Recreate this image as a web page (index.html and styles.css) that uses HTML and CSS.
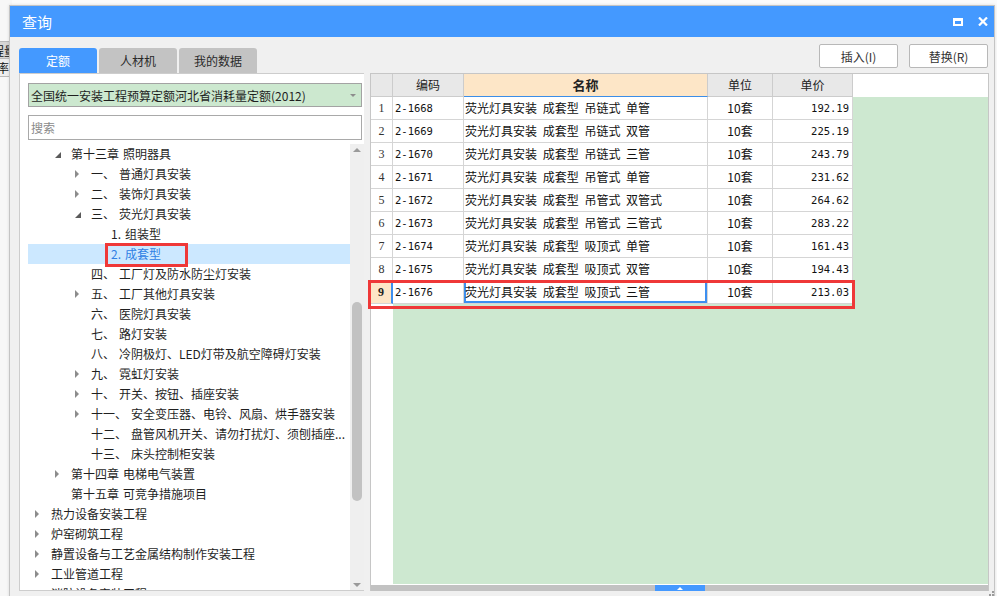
FILE: index.html
```html
<!DOCTYPE html>
<html lang="zh-CN">
<head>
<meta charset="utf-8">
<title>查询</title>
<link rel="stylesheet" href="styles.css">
</head>
<body>
<div class="app-bg">
  <div class="bg-row bg-row1"><span class="bg-t1">程量</span></div>
  <div class="bg-row bg-row2"><span class="bg-t2">率</span></div>
</div>

<div class="dialog">
  <div class="titlebar">
    <span class="title">查询</span>
    <div class="title-btns">
      <span class="btn-max"></span>
      <svg class="btn-close" width="10" height="9" viewBox="0 0 10 9"><path d="M1 0.5 L9 8.5 M9 0.5 L1 8.5" stroke="#fff" stroke-width="2.2" fill="none"/></svg>
    </div>
  </div>

  <div class="dlg-body">
    <div class="left-col">
      <div class="tabs">
        <div class="tab active">定额</div>
        <div class="tab">人材机</div>
        <div class="tab">我的数据</div>
      </div>
      <div class="panel">
        <div class="combo"><span>全国统一安装工程预算定额河北省消耗量定额(2012)</span><span class="combo-arrow"></span></div>
        <div class="search">搜索</div>
        <div class="tree-wrap">
          <div class="tree">
            <div class="row l1"><span class="tg open"></span><span class="lb"><span class="no">第十三章</span>照明器具</span></div>
            <div class="row l2"><span class="tg closed"></span><span class="lb"><span class="no">一、</span>普通灯具安装</span></div>
            <div class="row l2"><span class="tg closed"></span><span class="lb"><span class="no">二、</span>装饰灯具安装</span></div>
            <div class="row l2"><span class="tg open"></span><span class="lb"><span class="no">三、</span>荧光灯具安装</span></div>
            <div class="row l3"><span class="tg"></span><span class="lb"><span class="no">1.</span>组装型</span></div>
            <div class="row l3 sel"><span class="tg"></span><span class="lb"><span class="no">2.</span>成套型</span></div>
            <div class="row l2"><span class="tg"></span><span class="lb"><span class="no">四、</span>工厂灯及防水防尘灯安装</span></div>
            <div class="row l2"><span class="tg closed"></span><span class="lb"><span class="no">五、</span>工厂其他灯具安装</span></div>
            <div class="row l2"><span class="tg"></span><span class="lb"><span class="no">六、</span>医院灯具安装</span></div>
            <div class="row l2"><span class="tg"></span><span class="lb"><span class="no">七、</span>路灯安装</span></div>
            <div class="row l2"><span class="tg"></span><span class="lb"><span class="no">八、</span>冷阴极灯、LED灯带及航空障碍灯安装</span></div>
            <div class="row l2"><span class="tg closed"></span><span class="lb"><span class="no">九、</span>霓虹灯安装</span></div>
            <div class="row l2"><span class="tg closed"></span><span class="lb"><span class="no">十、</span>开关、按钮、插座安装</span></div>
            <div class="row l2"><span class="tg closed"></span><span class="lb"><span class="no">十一、</span>安全变压器、电铃、风扇、烘手器安装</span></div>
            <div class="row l2"><span class="tg"></span><span class="lb"><span class="no">十二、</span>盘管风机开关、请勿打扰灯、须刨插座...</span></div>
            <div class="row l2"><span class="tg"></span><span class="lb"><span class="no">十三、</span>床头控制柜安装</span></div>
            <div class="row l1"><span class="tg closed"></span><span class="lb"><span class="no">第十四章</span>电梯电气装置</span></div>
            <div class="row l1"><span class="tg"></span><span class="lb"><span class="no">第十五章</span>可竞争措施项目</span></div>
            <div class="row l0"><span class="tg closed"></span><span class="lb">热力设备安装工程</span></div>
            <div class="row l0"><span class="tg closed"></span><span class="lb">炉窑砌筑工程</span></div>
            <div class="row l0"><span class="tg closed"></span><span class="lb">静置设备与工艺金属结构制作安装工程</span></div>
            <div class="row l0"><span class="tg closed"></span><span class="lb">工业管道工程</span></div>
            <div class="row l0"><span class="tg closed"></span><span class="lb">消防设备安装工程</span></div>
          </div>
          <div class="vscroll">
            <span class="v-up"></span>
            <span class="v-thumb"></span>
            <span class="v-down"></span>
          </div>
        </div>
      </div>
    </div>

    <div class="right-col">
      <div class="actions">
        <button class="btn">插入(I)</button>
        <button class="btn">替换(R)</button>
      </div>
      <div class="grid">
        <div class="g-head">
          <div class="h"></div>
          <div class="h">编码</div>
          <div class="h h-name">名称</div>
          <div class="h">单位</div>
          <div class="h">单价</div>
          <div class="h h-fill"></div>
        </div>
        <div class="g-body">
          <div class="g-row"><div class="c c-no">1</div><div class="c c-code">2-1668</div><div class="c c-name">荧光灯具安装 成套型 吊链式 单管</div><div class="c c-unit">10套</div><div class="c c-price">192.19</div></div>
          <div class="g-row"><div class="c c-no">2</div><div class="c c-code">2-1669</div><div class="c c-name">荧光灯具安装 成套型 吊链式 双管</div><div class="c c-unit">10套</div><div class="c c-price">225.19</div></div>
          <div class="g-row"><div class="c c-no">3</div><div class="c c-code">2-1670</div><div class="c c-name">荧光灯具安装 成套型 吊链式 三管</div><div class="c c-unit">10套</div><div class="c c-price">243.79</div></div>
          <div class="g-row"><div class="c c-no">4</div><div class="c c-code">2-1671</div><div class="c c-name">荧光灯具安装 成套型 吊管式 单管</div><div class="c c-unit">10套</div><div class="c c-price">231.62</div></div>
          <div class="g-row"><div class="c c-no">5</div><div class="c c-code">2-1672</div><div class="c c-name">荧光灯具安装 成套型 吊管式 双管式</div><div class="c c-unit">10套</div><div class="c c-price">264.62</div></div>
          <div class="g-row"><div class="c c-no">6</div><div class="c c-code">2-1673</div><div class="c c-name">荧光灯具安装 成套型 吊管式 三管式</div><div class="c c-unit">10套</div><div class="c c-price">283.22</div></div>
          <div class="g-row"><div class="c c-no">7</div><div class="c c-code">2-1674</div><div class="c c-name">荧光灯具安装 成套型 吸顶式 单管</div><div class="c c-unit">10套</div><div class="c c-price">161.43</div></div>
          <div class="g-row"><div class="c c-no">8</div><div class="c c-code">2-1675</div><div class="c c-name">荧光灯具安装 成套型 吸顶式 双管</div><div class="c c-unit">10套</div><div class="c c-price">194.43</div></div>
          <div class="g-row cur"><div class="c c-no">9</div><div class="c c-code">2-1676</div><div class="c c-name">荧光灯具安装 成套型 吸顶式 三管</div><div class="c c-unit">10套</div><div class="c c-price">213.03</div></div>
        </div>
        <div class="hscroll"><span class="h-thumb"><span class="h-arrow"></span></span></div>
      </div>
    </div>
  </div>
  <span class="grip"></span>
</div>

<div class="mark mark-tree"></div>
<div class="mark mark-row"></div>
</body>
</html>
```

FILE: styles.css
```css
* { box-sizing: border-box; }
html, body { margin: 0; padding: 0; }
body {
  width: 997px;
  height: 596px;
  overflow: hidden;
  position: relative;
  background: #fbfbfb;
  font-family: "Noto Sans CJK SC", "Microsoft YaHei", sans-serif;
  font-size: 12px;
  color: #1f1f1f;
}

/* application behind the dialog */
.app-bg {
  position: absolute;
  left: 0;
  top: 0;
  width: 12px;
  height: 596px;
  background: #f7f7f7;
}
.bg-row {
  height: 18px;
  line-height: 17px;
  white-space: nowrap;
  overflow: hidden;
  border-bottom: 1px solid #b9b9b9;
  color: #111;
}
.bg-row1 { margin-top: 41px; background: #d6d6d6; border-top: 1px solid #b9b9b9; }
.bg-row2 { background: #eeeeee; }
.bg-t1 { display: inline-block; margin-left: -8px; }
.bg-t2 { display: inline-block; margin-left: -3px; }

/* dialog window */
.dialog {
  position: absolute;
  left: 9px;
  top: 5px;
  width: 986px;
  height: 600px;
  border: 1px solid #c4c4c4;
  background: #f0f0f0;
  display: flex;
  flex-direction: column;
  box-shadow: 0 0 3px rgba(0, 0, 0, 0.12);
}
.titlebar {
  flex: none;
  height: 31px;
  background: #4499ff;
  color: #fff;
  display: flex;
  align-items: center;
  justify-content: space-between;
  padding: 0 6px 0 12px;
}
.title { font-size: 15px; }
.title-btns { display: flex; align-items: center; gap: 15px; }
.btn-max {
  display: block;
  width: 10px;
  height: 8px;
  border: 2px solid #fff;
  border-top-width: 3px;
}
.btn-close { display: block; }

.dlg-body {
  flex: 1;
  display: flex;
  padding: 0 5px 0 9px;
  min-height: 0;
}

/* left column */
.left-col {
  width: 345px;
  flex: none;
  display: flex;
  flex-direction: column;
}
.tabs {
  margin-top: 11px;
  height: 25px;
  display: flex;
  gap: 2px;
}
.tab {
  width: 78px;
  height: 25px;
  line-height: 25px;
  text-align: center;
  background: #c3c3c3;
  color: #2a2a2a;
  border-radius: 3px 3px 0 0;
}
.tab.active { background: #4499ff; color: #fff; }

.panel {
  height: 518px;
  border: 1px solid #cdcdcd;
  border-right: none;
  background: #fff;
  padding: 9px 0 0 8px;
  display: flex;
  flex-direction: column;
}
.combo {
  width: 334px;
  height: 24px;
  flex: none;
  border: 1px solid #a3a3a3;
  background: #cce8cf;
  display: flex;
  align-items: center;
  justify-content: space-between;
  padding: 0 5px 0 2px;
  white-space: nowrap;
}
.combo-arrow {
  width: 0;
  height: 0;
  border-top: 3px solid #8d8d8d;
  border-left: 3px solid transparent;
  border-right: 3px solid transparent;
}
.search {
  width: 334px;
  height: 25px;
  flex: none;
  margin-top: 8px;
  border: 1px solid #a9a9a9;
  background: #fff;
  padding-left: 2px;
  line-height: 23px;
  color: #8a8a8a;
}
.tree-wrap {
  margin-top: 4px;
  flex: 1;
  min-height: 0;
  display: flex;
  overflow: hidden;
}
.tree {
  width: 322px;
  flex: none;
  overflow: hidden;
}
.row {
  height: 20px;
  display: flex;
  align-items: center;
  white-space: nowrap;
}
.row.l0 { padding-left: 8px; }
.row.l1 { padding-left: 28px; }
.row.l2 { padding-left: 48px; }
.row.l3 { padding-left: 68px; }
.row.sel { background: #cce8ff; color: #2f80e4; }
.tg {
  width: 15px;
  height: 20px;
  flex: none;
  position: relative;
}
.tg.closed::before {
  content: "";
  position: absolute;
  left: -1px;
  top: 6px;
  border-left: 4px solid #8c8c8c;
  border-top: 4px solid transparent;
  border-bottom: 4px solid transparent;
}
.tg.open::before {
  content: "";
  position: absolute;
  left: -1px;
  top: 8px;
  border-right: 6px solid #5a5a5a;
  border-top: 6px solid transparent;
}
.lb {
  line-height: 20px;
}
.no { margin-right: 4px; }

.vscroll {
  width: 14px;
  flex: none;
  background: #efefef;
  display: flex;
  flex-direction: column;
  align-items: center;
}
.v-up {
  margin-top: 4px;
  width: 0;
  height: 0;
  border-bottom: 4px solid #9a9a9a;
  border-left: 4px solid transparent;
  border-right: 4px solid transparent;
}
.v-thumb {
  margin-top: 150px;
  width: 10px;
  height: 199px;
  border-radius: 5px;
  background: #c2c2c2;
}
.v-down {
  margin-top: auto;
  margin-bottom: 3px;
  width: 0;
  height: 0;
  border-top: 4px solid #9a9a9a;
  border-left: 4px solid transparent;
  border-right: 4px solid transparent;
}

/* right column */
.right-col {
  width: 619px;
  flex: none;
  margin-left: 6px;
  display: flex;
  flex-direction: column;
}
.actions {
  margin-top: 7px;
  height: 24px;
  display: flex;
  justify-content: flex-end;
  gap: 11px;
  padding-right: 1px;
}
.btn {
  width: 79px;
  height: 24px;
  border: 1px solid #b8b8b8;
  border-radius: 2px;
  background: #fff;
  font-family: "Noto Sans CJK SC", "Microsoft YaHei", sans-serif;
  font-size: 12px;
  color: #333;
  padding: 0;
}
.grid {
  margin-top: 5px;
  height: 518px;
  border: 1px solid #c6c6c6;
  border-bottom: none;
  background: #fff;
  display: flex;
  flex-direction: column;
}
.g-head {
  height: 23px;
  flex: none;
  display: grid;
  grid-template-columns: 22px 71px 244px 65px 80px 1fr;
}
.h {
  background: #e8e8e8;
  border-right: 1px solid #cccccc;
  border-bottom: 1px solid #cccccc;
  text-align: center;
  line-height: 22px;
  color: #222;
}
.h-name {
  background: #fde6c7;
  border-bottom-color: #3b8ee8;
  font-weight: bold;
  font-size: 13px;
}
.h-fill { background: #fff; border: none; }

.g-body {
  flex: 1;
  min-height: 0;
  background: linear-gradient(to right, #fff 22px, #cde8d0 22px);
}
.g-row {
  height: 23px;
  display: grid;
  grid-template-columns: 22px 71px 244px 65px 80px;
  width: 482px;
}
.c {
  background: #fff;
  border-right: 1px solid #d5d5d5;
  border-bottom: 1px solid #d5d5d5;
  line-height: 22px;
  white-space: nowrap;
  overflow: hidden;
  color: #111;
}
.c-no {
  text-align: center;
  font-family: "Liberation Serif", serif;
  font-size: 12px;
  color: #333;
}
.c-code {
  padding-left: 2px;
  font-family: "DejaVu Sans Mono", monospace;
  font-size: 10.5px;
}
.c-name { padding-left: 1px; word-spacing: 3px; }
.c-unit { text-align: center; }
.c-price {
  text-align: right;
  padding-right: 3px;
  font-family: "DejaVu Sans Mono", monospace;
  font-size: 10.5px;
}
.g-row.cur .c-no {
  background: #fde6c7;
  font-weight: bold;
  color: #222;
  border-right: 2px solid #3d8ff0;
}
.g-row.cur .c-name { box-shadow: inset 0 0 0 2px #3d8ff0; }

.hscroll {
  margin-top: 1px;
  height: 6px;
  flex: none;
  background: #c2c2c2;
  display: flex;
}
.h-thumb {
  margin-left: 284px;
  width: 50px;
  height: 6px;
  background: #4499ff;
  display: flex;
  justify-content: center;
  align-items: center;
}
.h-arrow {
  width: 0;
  height: 0;
  border-bottom: 3px solid #fff;
  border-left: 3px solid transparent;
  border-right: 3px solid transparent;
}

.grip {
  position: absolute;
  right: 0;
  bottom: 8px;
  width: 2px;
  height: 2px;
  background: #9a9a9a;
  box-shadow: 0 -3px 0 #9a9a9a, -3px 0 0 #9a9a9a;
}

/* annotation boxes drawn over the screenshot */
.mark {
  position: absolute;
  border: 3px solid #ef3838;
  pointer-events: none;
}
.mark-tree { left: 105px; top: 243px; width: 83px; height: 24px; }
.mark-row { left: 368px; top: 280px; width: 487px; height: 29px; }
```
